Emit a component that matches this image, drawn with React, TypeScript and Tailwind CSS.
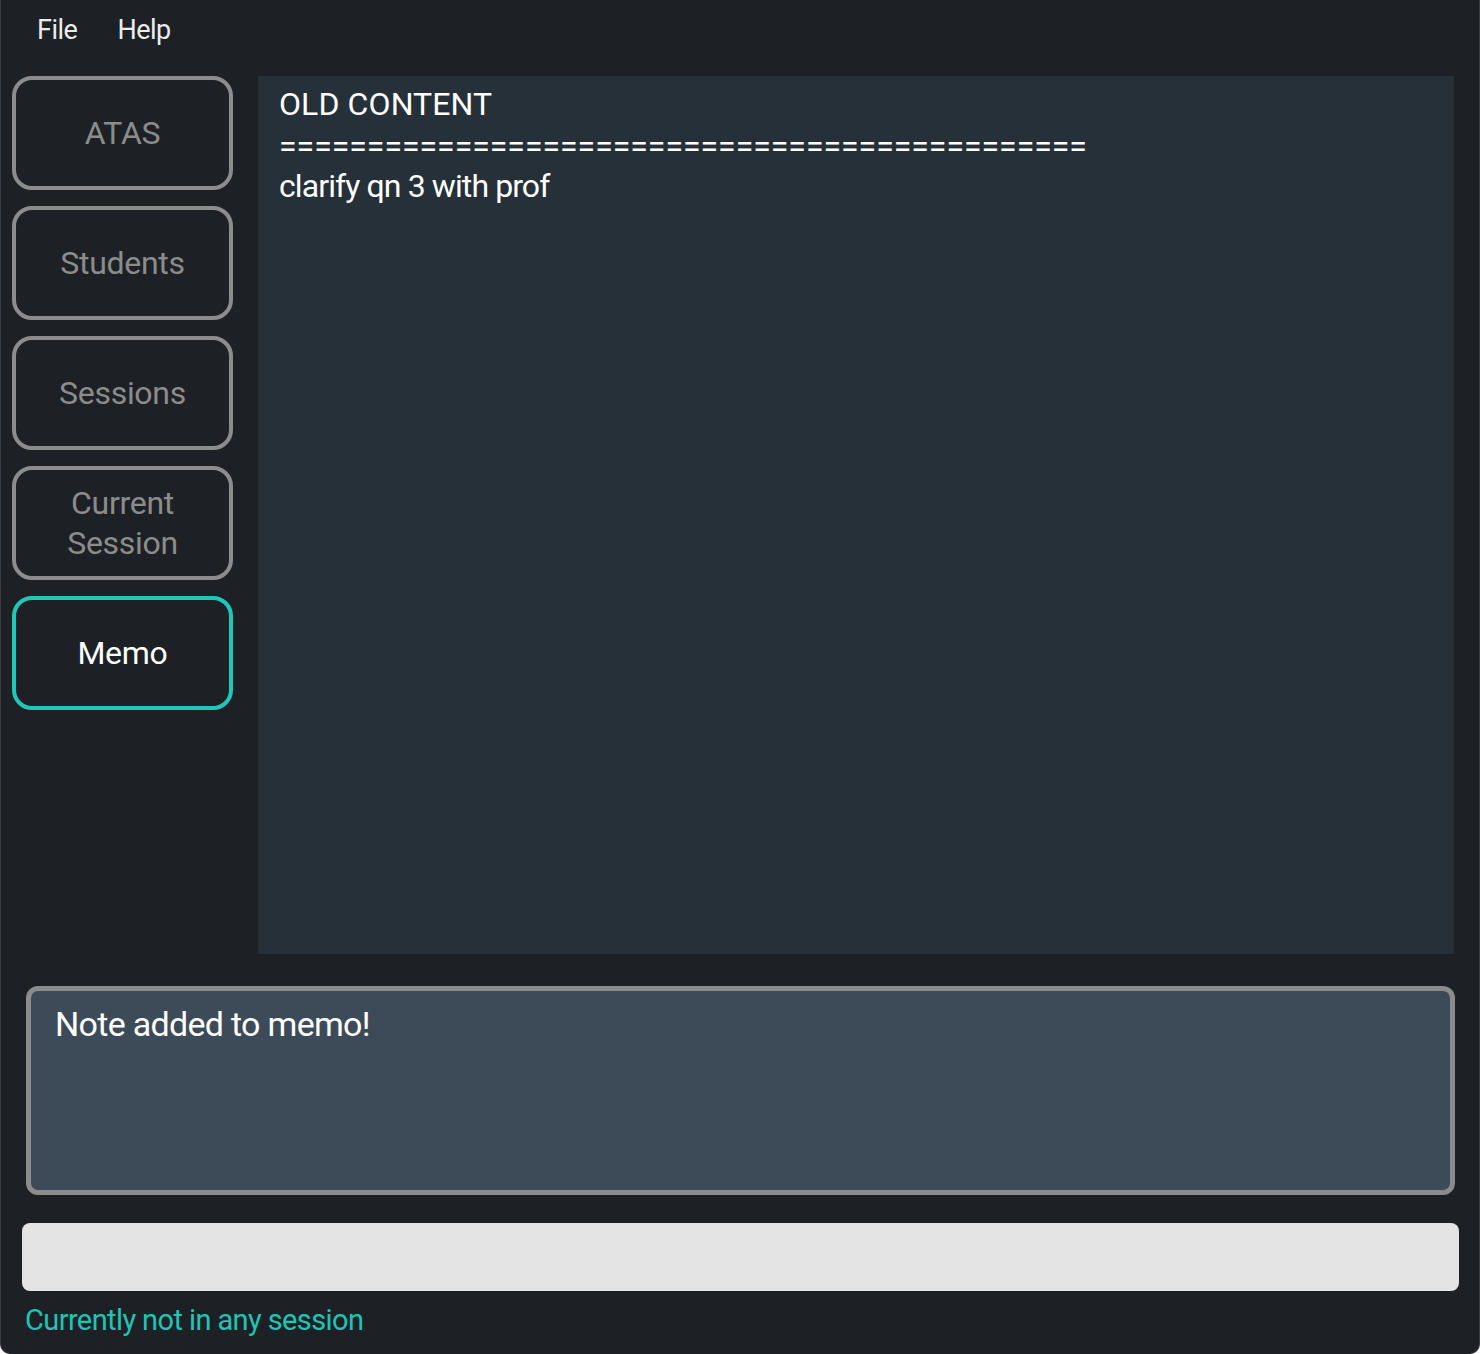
import React from 'react';

const navItems = [
  { label: 'ATAS' },
  { label: 'Students' },
  { label: 'Sessions' },
  { label: 'Current Session', twoLine: true },
  { label: 'Memo', active: true },
];

export default function App() {
  return (
    <div
      className="w-[1480px] h-[1354px] bg-[#1d2125] border-x border-[#3a3d42] rounded-b-[10px] overflow-hidden flex flex-col"
      style={{ fontFamily: 'Roboto, "Noto Sans", sans-serif' }}
    >
      {/* Menu bar */}
      <div className="h-[76px] flex items-start pt-[10px] pl-[36px] gap-[40px] text-[27px] text-[#ececec] tracking-[-0.5px]">
        <span>File</span>
        <span>Help</span>
      </div>

      <div className="flex h-[878px]">
        {/* Sidebar */}
        <div className="w-[257px] pl-[11px] flex flex-col gap-[16px]">
          {navItems.map((item) => (
            <div
              key={item.label}
              className={`w-[221px] h-[114px] rounded-[20px] border-[4px] flex items-center justify-center text-center text-[32px] leading-[40px] tracking-[-0.3px] ${
                item.active ? 'border-[#21c7b6] text-white' : 'border-[#8c8c8c] text-[#8c8c8c]'
              }`}
            >
              {item.twoLine ? (
                <span>
                  Current
                  <br />
                  Session
                </span>
              ) : (
                item.label
              )}
            </div>
          ))}
        </div>

        {/* Main content */}
        <div className="w-[1196px] bg-[#263038] pl-[21px] pt-[8px] text-white text-[32px] leading-[40px]">
          <div className="tracking-[0.1px]">OLD CONTENT</div>
          <div className="tracking-[0px] h-[42px] pt-[2px]">==============================================</div>
          <div className="tracking-[-0.9px]">clarify qn 3 with prof</div>
        </div>
      </div>

      {/* Result display */}
      <div className="mt-[32px] ml-[25px] w-[1429px] h-[209px] bg-[#3d4b59] border-[5px] border-[#8c8c8c] rounded-[12px] pl-[24px] pt-[8px] text-white text-[34px] tracking-[-0.7px]">
        Note added to memo!
      </div>

      {/* Command box */}
      <div className="mt-[28px] ml-[21px] w-[1437px] h-[68px] bg-[#e4e4e4] rounded-[8px]" />

      {/* Status bar */}
      <div className="mt-[8px] ml-[24px] text-[29px] text-[#20c4b4] tracking-[-0.6px]">
        Currently not in any session
      </div>
    </div>
  );
}
